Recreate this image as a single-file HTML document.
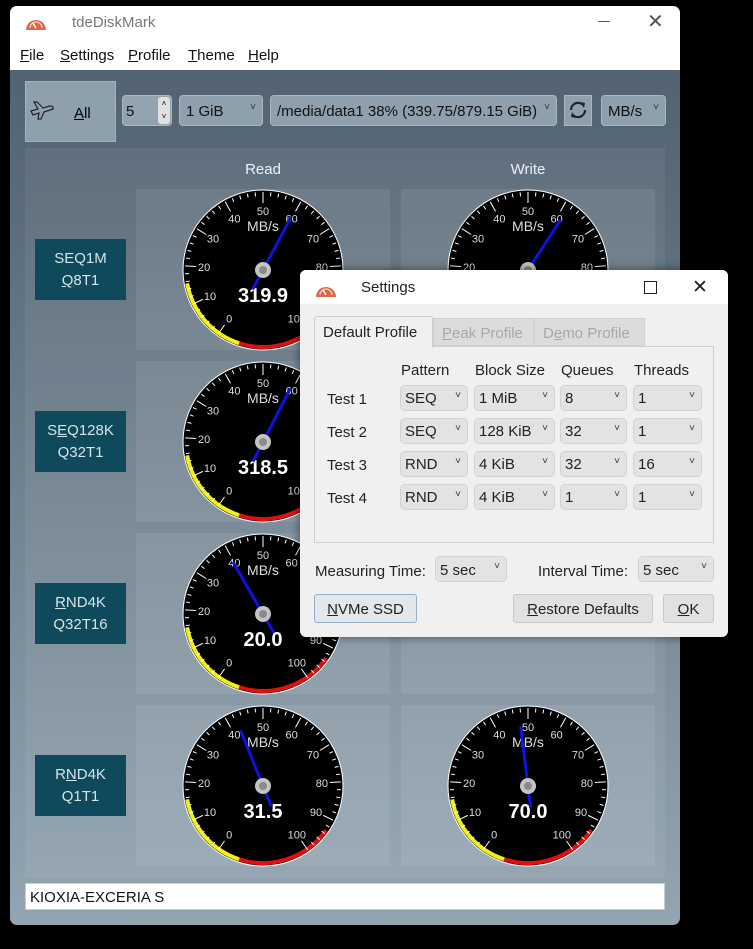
<!DOCTYPE html>
<html><head><meta charset="utf-8"><style>
*{box-sizing:border-box;margin:0;padding:0}
body{width:753px;height:949px;background:#000;font-family:"Liberation Sans",sans-serif;position:relative;overflow:hidden}
.abs{position:absolute}
#win{left:10px;top:6px;width:670px;height:919px;border-radius:7px;overflow:hidden;background:linear-gradient(#4f5f6d 0px,#5a6b79 200px,#8a9ca9 800px,#93a5b1 919px)}
.title{left:0;top:0;width:670px;height:32px;background:#fff;font-size:15px;color:#777}
.menu{left:0;top:32px;width:670px;height:32px;background:#fff;font-size:15px;color:#111}
.menu span{position:absolute;top:9px}
u{text-decoration:underline}
.cb{position:absolute;background:#8ea0ac;border:1px solid #a9b8c2;border-radius:4px;font-size:15px;color:#111;padding:7px 0 0 6px;height:31px}
.cb:after{content:"\02C5";position:absolute;right:6px;top:6px;font-size:10px;color:#333}
#inner{left:15px;top:142px;width:640px;height:730px;background:rgba(255,255,255,0.06)}
.cell{position:absolute;width:254px;height:161px;background:rgba(255,255,255,0.08)}
.lab{position:absolute;left:25px;width:91px;height:61px;background:#0e4a5b;color:#d6e4ea;font-size:15px;text-align:center;line-height:22px;padding-top:9px}
.hdr{position:absolute;top:155px;font-size:15px;color:#eef2f5;width:100px;text-align:center}
#dlg{left:300px;top:270px;width:428px;height:367px;background:#f0f0f0;border-radius:6px;overflow:hidden;box-shadow:0 0 10px rgba(0,0,0,.5)}
#dlg .t{left:0;top:0;width:428px;height:34px;background:#fff;font-size:15px;color:#222}
.dc{position:absolute;background:#e3e3e3;border:1px solid #d2d2d2;border-radius:5px;height:26px;font-size:15px;color:#222;padding:4px 0 0 4px}
.dc:after{content:"\02C5";position:absolute;right:6px;top:4px;font-size:10px;color:#333}
.dt{position:absolute;font-size:15px;color:#222}
.btn{position:absolute;background:#e1e1e1;border:1px solid #c9c9c9;border-radius:3px;height:29px;font-size:15px;color:#222;text-align:center;padding-top:6px}
</style></head><body>
<div id="win" class="abs">
 <div class="abs title">
  <svg class="abs" style="left:14px;top:7px" width="24" height="18" viewBox="0 0 24 18"><path d="M2 17 A10 10 0 0 1 22 17 Z" fill="#d9684a"/><path d="M6 15 A6 6 0 0 1 18 15" fill="none" stroke="#f3c0b0" stroke-width="1.5"/><line x1="12" y1="15" x2="9" y2="10" stroke="#fff" stroke-width="1.5"/></svg>
  <span class="abs" style="left:62px;top:8px">tdeDiskMark</span>
  <span class="abs" style="left:588px;top:15px;width:12px;height:1px;background:#555"></span>
  <span class="abs" style="left:637px;top:3px;font-size:20px;color:#555">✕</span>
 </div>
 <div class="abs menu">
  <span style="left:10px"><u>F</u>ile</span><span style="left:50px"><u>S</u>ettings</span><span style="left:118px"><u>P</u>rofile</span><span style="left:178px"><u>T</u>heme</span><span style="left:238px"><u>H</u>elp</span>
 </div>
 <div class="abs" style="left:15px;top:75px;width:91px;height:61px;background:#8ea0ac;border:1px solid #a3b2bc"></div>
 <svg class="abs" style="left:19px;top:93px" width="26" height="22" viewBox="0 0 26 22"><path d="M2 12 L9 10 L5 3 L8 3 L14 9 L21 7 Q25 7 24 10 L15 13 L12 20 L9 20 L10 14 L4 16 Z" fill="none" stroke="#223" stroke-width="1.2"/></svg>
 <span class="abs" style="left:64px;top:99px;font-size:15px"><u>A</u>ll</span>
 <div class="cb" style="left:112px;top:89px;width:50px;background:#91a3af;padding-left:3px">5</div>
 <div class="abs" style="left:148px;top:91px;width:12px;height:27px;background:#e0e0e0;border-radius:3px;font-size:8px;text-align:center;line-height:13px">˄<br>˅</div>
 <div class="cb" style="left:169px;top:89px;width:84px">1 GiB</div>
 <div class="cb" style="left:260px;top:89px;width:287px">/media/data1 38% (339.75/879.15 GiB)</div>
 <div class="abs" style="left:554px;top:89px;width:28px;height:31px;background:#8ea0ac;border:1px solid #a9b8c2"></div>
 <svg class="abs" style="left:557px;top:93px" width="22" height="22" viewBox="0 0 22 22"><path d="M4 11 A7 7 0 0 1 16 6" fill="none" stroke="#223" stroke-width="2.2"/><path d="M18 11 A7 7 0 0 1 6 16" fill="none" stroke="#223" stroke-width="2.2"/><path d="M13 3 L18 4 L17 9Z" fill="#223"/><path d="M9 19 L4 18 L5 13Z" fill="#223"/></svg>
 <div class="cb" style="left:591px;top:89px;width:65px">MB/s</div>
 <div id="inner" class="abs"></div>
 <div class="hdr" style="left:203px">Read</div>
 <div class="hdr" style="left:468px">Write</div>
 <div class="cell" style="left:126px;top:183px"></div><div class="cell" style="left:391px;top:183px"></div>
 <div class="cell" style="left:126px;top:355px"></div><div class="cell" style="left:391px;top:355px"></div>
 <div class="cell" style="left:126px;top:527px"></div><div class="cell" style="left:391px;top:527px"></div>
 <div class="cell" style="left:126px;top:699px"></div><div class="cell" style="left:391px;top:699px"></div>
 <div class="lab" style="top:233px">SEQ1M<br><u>Q</u>8T1</div>
 <div class="lab" style="top:405px">S<u>E</u>Q128K<br>Q32T1</div>
 <div class="lab" style="top:577px"><u>R</u>ND4K<br>Q32T16</div>
 <div class="lab" style="top:749px">R<u>N</u>D4K<br>Q1T1</div>
 <svg id="g" class="abs" style="left:0;top:0" width="670" height="919"></svg>
 <div class="abs" style="left:15px;top:877px;width:640px;height:27px;background:#fff;border:1px solid #ccc;font-size:15px;padding:5px 0 0 4px;color:#111">KIOXIA-EXCERIA S</div>
</div>

<div id="dlg" class="abs">
 <div class="abs t">
  <svg class="abs" style="left:14px;top:10px" width="24" height="18" viewBox="0 0 24 18"><path d="M2 17 A10 10 0 0 1 22 17 Z" fill="#d9684a"/><path d="M6 15 A6 6 0 0 1 18 15" fill="none" stroke="#f3c0b0" stroke-width="1.5"/><line x1="12" y1="15" x2="9" y2="10" stroke="#fff" stroke-width="1.5"/></svg>
  <span class="abs" style="left:61px;top:9px">Settings</span>
  <span class="abs" style="left:344px;top:11px;width:13px;height:13px;border:1.3px solid #222"></span>
  <span class="abs" style="left:392px;top:6px;font-size:19px;color:#222">✕</span>
 </div>
 <div class="abs" style="left:14px;top:76px;width:400px;height:197px;border:1px solid #cfcfcf;background:#f0f0f0"></div>
 <div class="abs" style="left:14px;top:46px;width:119px;height:32px;background:#f0f0f0;border:1px solid #cfcfcf;border-bottom:none;border-radius:3px 3px 0 0;font-size:15px;padding:7px 0 0 8px;color:#222">Default Profile</div>
 <div class="abs" style="left:133px;top:48px;width:101px;height:28px;background:#dcdcdc;border:1px solid #d0d0d0;font-size:15px;padding:6px 0 0 8px;color:#a8a8a8"><u>P</u>eak Profile</div>
 <div class="abs" style="left:234px;top:48px;width:111px;height:28px;background:#dcdcdc;border:1px solid #d0d0d0;font-size:15px;padding:6px 0 0 8px;color:#a8a8a8">D<u>e</u>mo Profile</div>
 <span class="dt" style="left:101px;top:92px">Pattern</span><span class="dt" style="left:175px;top:92px">Block Size</span><span class="dt" style="left:261px;top:92px">Queues</span><span class="dt" style="left:334px;top:92px">Threads</span>
 <span class="dt" style="left:27px;top:121px">Test 1</span><span class="dt" style="left:27px;top:154px">Test 2</span><span class="dt" style="left:27px;top:187px">Test 3</span><span class="dt" style="left:27px;top:220px">Test 4</span>
 <div class="dc" style="left:100px;top:115px;width:68px">SEQ</div><div class="dc" style="left:174px;top:115px;width:81px">1 MiB</div><div class="dc" style="left:260px;top:115px;width:67px">8</div><div class="dc" style="left:333px;top:115px;width:69px">1</div>
 <div class="dc" style="left:100px;top:148px;width:68px">SEQ</div><div class="dc" style="left:174px;top:148px;width:81px">128 KiB</div><div class="dc" style="left:260px;top:148px;width:67px">32</div><div class="dc" style="left:333px;top:148px;width:69px">1</div>
 <div class="dc" style="left:100px;top:181px;width:68px">RND</div><div class="dc" style="left:174px;top:181px;width:81px">4 KiB</div><div class="dc" style="left:260px;top:181px;width:67px">32</div><div class="dc" style="left:333px;top:181px;width:69px">16</div>
 <div class="dc" style="left:100px;top:214px;width:68px">RND</div><div class="dc" style="left:174px;top:214px;width:81px">4 KiB</div><div class="dc" style="left:260px;top:214px;width:67px">1</div><div class="dc" style="left:333px;top:214px;width:69px">1</div>
 <span class="dt" style="left:15px;top:293px">Measuring Time:</span>
 <div class="dc" style="left:135px;top:286px;width:72px;padding-top:5px">5 sec</div>
 <span class="dt" style="left:238px;top:293px">Interval Time:</span>
 <div class="dc" style="left:338px;top:286px;width:76px;padding-top:5px">5 sec</div>
 <div class="btn" style="left:14px;top:324px;width:103px;border-color:#8fb0cf;background:#e3e7ec"><u>N</u>VMe SSD</div>
 <div class="btn" style="left:213px;top:324px;width:140px"><u>R</u>estore Defaults</div>
 <div class="btn" style="left:363px;top:324px;width:51px"><u>O</u>K</div>
</div>

<script>
(function(){
var s=document.getElementById('g'),h='';
function P(cx,cy,r,a){a=a*Math.PI/180;return [cx+r*Math.sin(a),cy-r*Math.cos(a)];}
function arc(cx,cy,r,a1,a2,col,w){var p=P(cx,cy,r,a1),q=P(cx,cy,r,a2);var large=Math.abs(a2-a1)>180?1:0;var sw=a2>a1?1:0;return '<path d="M'+p[0]+' '+p[1]+' A'+r+' '+r+' 0 '+large+' '+sw+' '+q[0]+' '+q[1]+'" fill="none" stroke="'+col+'" stroke-width="'+w+'"/>';}
var G=[[253,264,319.9,28],[518,264,null,33],[253,436,318.5,27],[253,608,20.0,-30],[253,780,31.5,-22],[518,780,70.0,-7]];
G.forEach(function(g){var cx=g[0],cy=g[1];
h+='<circle cx="'+cx+'" cy="'+cy+'" r="80" fill="#000" stroke="#fff" stroke-width="1"/>';
h+=arc(cx,cy,77,-100,-162,'#f2ef12',4);
h+=arc(cx,cy,77,-162,-235,'#e01010',4);
for(var i=0;i<=50;i++){var a=-145+i*5.8;var p=P(cx,cy,78,a),q=P(cx,cy,i%5==0?67:74,a);h+='<line x1="'+p[0]+'" y1="'+p[1]+'" x2="'+q[0]+'" y2="'+q[1]+'" stroke="#fff" stroke-width="1"/>';}
for(var k=0;k<=10;k++){var a=-145+k*29;var p=P(cx,cy,59,a);h+='<text x="'+p[0]+'" y="'+(p[1]+4)+'" fill="#ddd" font-size="11" text-anchor="middle" font-family="Liberation Sans">'+(k*10)+'</text>';}
h+='<text x="'+cx+'" y="'+(cy-39)+'" fill="#ddd" font-size="14" text-anchor="middle" font-family="Liberation Sans">MB/s</text>';
var t=P(cx,cy,60,g[3]),b=P(cx,cy,-22,g[3]);
if(g[2]!==null)h+='<text x="'+cx+'" y="'+(cy+32)+'" fill="#fff" font-size="20" font-weight="bold" text-anchor="middle" font-family="Liberation Sans">'+g[2].toFixed(1)+'</text>';
h+='<line x1="'+b[0]+'" y1="'+b[1]+'" x2="'+t[0]+'" y2="'+t[1]+'" stroke="#1010e0" stroke-width="3"/>';
h+='<circle cx="'+cx+'" cy="'+cy+'" r="8" fill="#c4c4c4"/><circle cx="'+cx+'" cy="'+cy+'" r="4" fill="#8a8a8a"/>';
});
s.innerHTML=h;})();
</script>
</body></html>
